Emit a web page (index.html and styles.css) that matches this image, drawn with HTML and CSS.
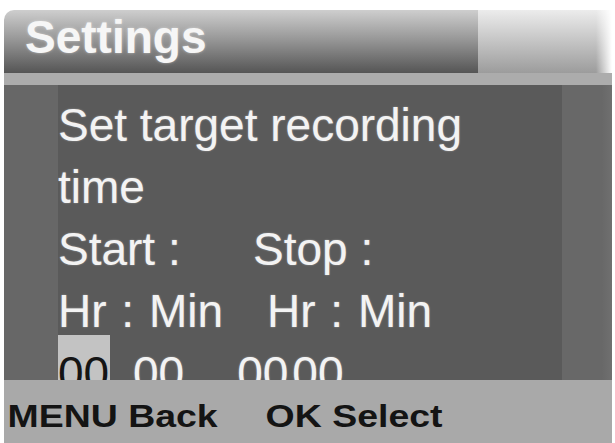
FILE: index.html
```html
<!DOCTYPE html>
<html lang="en">
<head>
  <meta charset="UTF-8" />
  <meta name="viewport" content="width=device-width, initial-scale=1.0"/>
  <title>Settings</title>
  <link rel="stylesheet" href="styles.css">
</head>
<body>
  <div class="screen">
    <div class="header">
      <div class="title">Settings</div>
      <div class="header-side"></div>
    </div>
    <div class="stripe"></div>

    <div class="body">
      <div class="gutter"></div>
      <div class="panel">
        <div class="line">Set target recording</div>
        <div class="line">time</div>
        <div class="line"><span class="col start">Start :</span><span>Stop :</span></div>
        <div class="line"><span class="col hr">Hr :&nbsp;Min</span><span>Hr :&nbsp;Min</span></div>
        <div class="line values">
          <span class="num sel">00</span>
          <span class="num gap-a">00</span>
          <span class="num gap-b">00</span>
          <span class="num gap-c">00</span>
        </div>
      </div>
      <div class="gutter right"></div>
    </div>

    <div class="footer">
      <div class="keys">
        <span>MENU Back</span>
        <span>OK Select</span>
      </div>
    </div>
  </div>
</body>
</html>
```

FILE: styles.css
```css
body { margin: 0; background: #fff; font-family: "Liberation Sans", Arial, sans-serif; overflow: hidden; }
.screen { margin: 10px 0 0 4px; width: 608px; }

.header { display: flex; height: 63px; }
.title {
  width: 474px;
  padding-left: 21px;
  box-sizing: border-box;
  border-top-left-radius: 10px;
  background: linear-gradient(#cecece, #999 45%, #555);
  color: #f6f6f6;
  font-weight: bold;
  font-size: 46px;
  line-height: 54px;
  text-shadow: 0 0 3px rgba(255,255,255,.45);
}
.header-side {
  flex: 1;
  background:
    linear-gradient(to right, rgba(255,255,255,0) 88%, #fff),
    linear-gradient(#ececec, #c4c4c4 50%, #9c9c9c);
}
.stripe { height: 12px; background: #acacac; }

.body { display: flex; height: 295px; }
.gutter { width: 54px; background: #676767; }
.gutter.right { flex: 1; background: linear-gradient(to right, #686868 80%, #707070); }
.panel {
  width: 504px;
  padding-top: 9px;
  box-sizing: border-box;
  background: #5a5a5a;
  color: #f3f3f3;
  font-size: 46px;
  line-height: 62px;
  overflow: hidden;
  text-shadow: 0 0 2px rgba(255,255,255,.4);
}
.line { white-space: nowrap; }
.col { display: inline-block; }
.col.start { width: 195px; }
.col.hr { width: 209px; }
.hr, .hr + span { word-spacing: 2px; }

.values { display: flex; align-items: flex-start; }
.num { display: inline-block; }
.sel {
  width: 52px;
  padding-top: 7px;
  margin-top: -7px;
  background: #c3c3c3;
  color: #151515;
  text-shadow: none;
}
.gap-a { margin-left: 23px; }
.gap-b { margin-left: 53px; }
.gap-c { margin-left: 4px; }

.footer {
  height: 63px;
  padding-top: 9px;
  box-sizing: border-box;
  background: #a9a9a9;
  color: #141414;
}
.keys {
  display: inline-flex;
  gap: 41px;
  padding-left: 3px;
  font-weight: bold;
  font-size: 32px;
  line-height: 54px;
  transform: scaleX(1.17);
  transform-origin: left;
}
```
